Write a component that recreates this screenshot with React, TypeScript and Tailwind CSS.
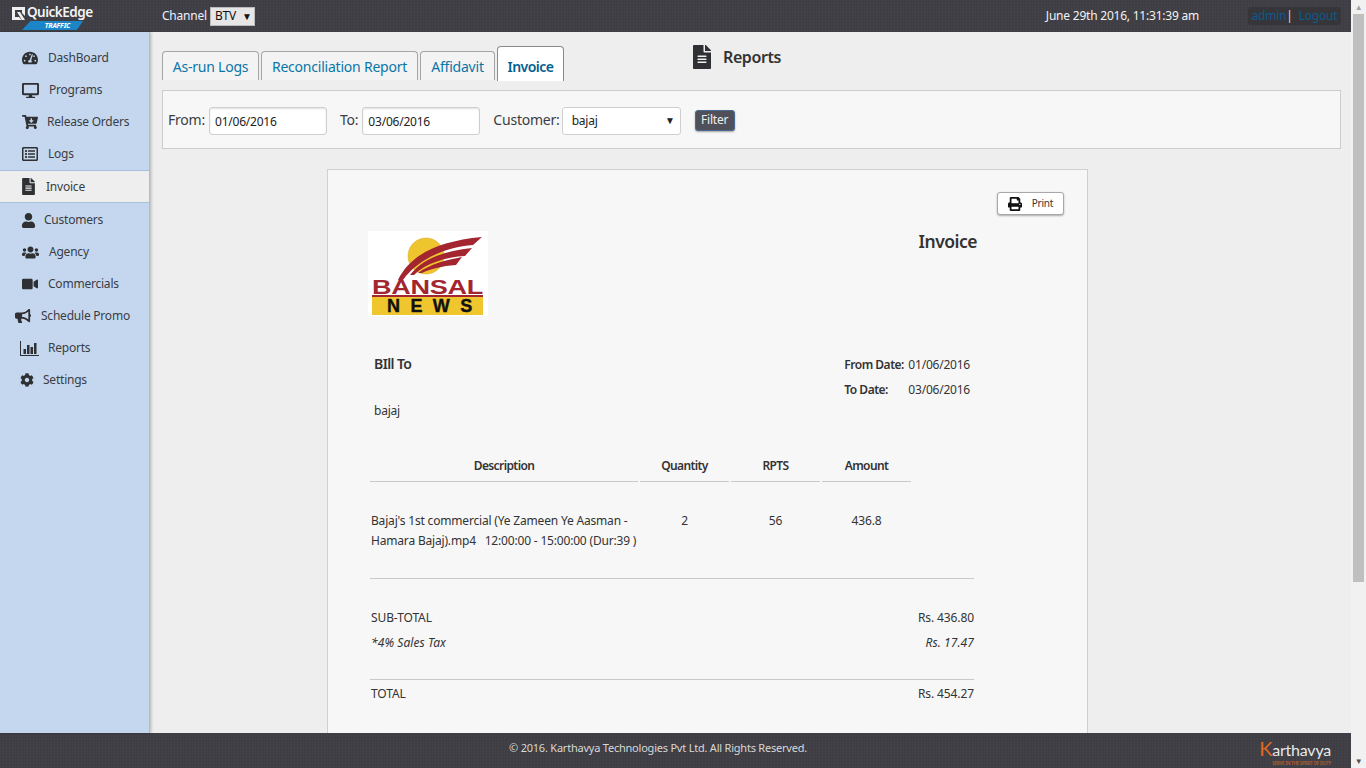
import React from "react";
import { FaTachometerAlt, FaDesktop, FaCartArrowDown, FaRegListAlt, FaFileAlt, FaUser, FaUsers, FaVideo, FaBullhorn, FaCog, FaPrint } from "react-icons/fa";

const font = "font-['Noto_Sans','Open_Sans',sans-serif] tracking-[-0.22px]";
const texture = "bg-[#3f3f45] bg-[repeating-linear-gradient(90deg,rgba(255,255,255,0.015)_0px,rgba(255,255,255,0.015)_1px,transparent_1px,transparent_3px),repeating-linear-gradient(0deg,rgba(0,0,0,0.03)_0px,rgba(0,0,0,0.03)_1px,transparent_1px,transparent_3px)]";

function ChartIcon() {
  return (
    <svg width="19" height="15" viewBox="0 0 19 15" fill="#2f3033">
      <rect x="0" y="0" width="1" height="15" />
      <rect x="0" y="14" width="19" height="1" />
      <rect x="3.5" y="8" width="2.5" height="5" />
      <rect x="7" y="4" width="2.5" height="9" />
      <rect x="10.5" y="6" width="2.5" height="7" />
      <rect x="14" y="2" width="2.5" height="11" />
    </svg>
  );
}

const items: { label: string; icon: React.ReactNode; pl: string; gap: string; active?: boolean }[] = [
  { label: "DashBoard", icon: <FaTachometerAlt size={16} />, pl: "pl-[22px]", gap: "w-[26px]" },
  { label: "Programs", icon: <FaDesktop size={17} />, pl: "pl-[22px]", gap: "w-[27px]" },
  { label: "Release Orders", icon: <FaCartArrowDown size={16} />, pl: "pl-[22px]", gap: "w-[25px]" },
  { label: "Logs", icon: <FaRegListAlt size={16} />, pl: "pl-[22px]", gap: "w-[26px]" },
  { label: "Invoice", icon: <FaFileAlt size={17} />, pl: "pl-[20px]", gap: "w-[26px]", active: true },
  { label: "Customers", icon: <FaUser size={15} />, pl: "pl-[21px]", gap: "w-[23px]" },
  { label: "Agency", icon: <FaUsers size={17} />, pl: "pl-[22px]", gap: "w-[27px]" },
  { label: "Commercials", icon: <FaVideo size={16} />, pl: "pl-[22px]", gap: "w-[26px]" },
  { label: "Schedule Promo", icon: <FaBullhorn size={16} />, pl: "pl-[15px]", gap: "w-[26px]" },
  { label: "Reports", icon: <ChartIcon />, pl: "pl-[20px]", gap: "w-[28px]" },
  { label: "Settings", icon: <FaCog size={14} />, pl: "pl-[20px]", gap: "w-[23px]" },
];

function Sidebar() {
  return (
    <aside className="w-[150px] shrink-0 bg-[#c5d7ee] border-r border-[#a9bdd6] shadow-[1px_0_3px_rgba(0,0,0,0.25)] pt-[10px] h-full z-10">
      {items.map((it) => (
        <div
          key={it.label}
          className={`flex items-center text-[12px] text-[#3a3d45] ${it.pl} ${
            it.active
              ? "h-[33px] mb-px bg-[#eeeeee] border-y border-[#a9c0dd]"
              : "h-[32px]"
          }`}
        >
          <span className="flex w-0 items-center text-[#2f3033]">
            <span className="shrink-0">{it.icon}</span>
          </span>
          <span className={`shrink-0 ${it.gap}`} />
          <span className="whitespace-nowrap">{it.label}</span>
        </div>
      ))}
    </aside>
  );
}

function Tab({ label, active, w }: { label: string; active?: boolean; w: string }) {
  return active ? (
    <div className={`${w} h-[35px] bg-white border border-b-0 border-[#8b8b8b] rounded-t-[4px] flex items-center justify-center text-[14px] font-semibold tracking-[-0.5px] text-[#00608f] -mb-px z-10 pt-[5px]`}>
      {label}
    </div>
  ) : (
    <div className={`${w} h-[29px] self-end bg-[#f3f3f3] border border-b-0 border-[#a5a5a5] rounded-t-[4px] flex items-center justify-center text-[14px] text-[#0a76a8]`}>
      {label}
    </div>
  );
}

function Field({ value, w }: { value: string; w: string }) {
  return (
    <div className={`${w} h-[28px] bg-white border border-[#cfcfcf] rounded-[3px] shadow-[inset_0_1px_2px_rgba(0,0,0,0.12)] flex items-center pl-[5px] pt-[2px] text-[12px] text-[#222]`}>
      {value}
    </div>
  );
}

function BansalLogo() {
  return (
    <svg width="120" height="85" viewBox="0 0 120 85" className="block">
      <rect width="120" height="85" fill="#ffffff" />
      <circle cx="58" cy="25" r="18" fill="#eec52e" stroke="#d9a91c" strokeWidth="0.5" />
      <path d="M30 49 C42 24 70 10 114 6 L105 14 C78 16 50 28 35 49 Z" fill="#a3252f" />
      <path d="M42 44 C54 28 76 20 104 17 L97 25 C78 26 58 32 46 44 Z" fill="#a3252f" />
      <path d="M50 42 C62 33 78 29 94 26 L88 34 C74 35 62 38 54 42 Z" fill="#a3252f" />
      <text x="4" y="63" fontFamily="'Liberation Sans',sans-serif" fontWeight="700" fontSize="20" fill="#a3252f" textLength="111" lengthAdjust="spacingAndGlyphs">BANSAL</text>
      <rect x="4" y="64" width="111" height="2" fill="#a3252f" />
      <rect x="4" y="66" width="111" height="18" fill="#f0c62e" />
      <text x="19" y="81" fontFamily="'Liberation Sans',sans-serif" fontWeight="700" fontSize="18" fill="#111" stroke="#111" strokeWidth="0.4" textLength="85">NEWS</text>
    </svg>
  );
}

function QuickEdgeLogo() {
  return (
    <div className="relative w-[100px] h-[32px] ml-[11px] shrink-0">
      <div className="flex items-center h-[18px] mt-[4px]">
        <svg width="15" height="15" viewBox="0 0 15 15" className="mt-[1px]">
          <path d="M1 1h13v9l-3-3V4H4v7h4l3 3H1z" fill="#f0f0f0" />
          <path d="M6 6h3l5 8h-3z" fill="#f0f0f0" />
        </svg>
        <span className="ml-px text-[13.5px] font-semibold text-[#f4f4f4] tracking-[-0.5px] leading-none">QuickEdge</span>
      </div>
      <div className="absolute left-[11px] top-[21px] w-[61px] h-[9px] bg-[#1c85c8] [clip-path:polygon(14%_0,100%_0,90%_100%,0_100%)] flex items-center justify-center text-[7px] font-bold italic text-white leading-none pl-[10px]">
        TRAFFIC
      </div>
    </div>
  );
}

function Header() {
  return (
    <header className={`h-[32px] shrink-0 flex items-center text-white ${texture}`}>
      <QuickEdgeLogo />
      <div className="ml-[51px] flex items-center text-[12px] text-[#eef]">
        <span>Channel</span>
        <div className="ml-[3px] w-[45px] h-[19px] bg-[#e6e6e6] border border-[#bbb] flex items-center text-[12px] text-[#111] pl-[4px]">
          BTV
          <span className="ml-[6px] text-[10px]">▼</span>
        </div>
      </div>
      <div className="ml-auto flex items-center">
        <span className="text-[12px] text-[#f2f2f2] mr-[49px]">June 29th 2016, 11:31:39 am</span>
        <div className="h-[18px] w-[93px] mr-[10px] rounded-[3px] bg-[#35353a] flex items-center justify-center text-[12px] text-[#0d5a8c]">
          admin<span className="text-[#ddd] mr-[6px]">|</span>Logout
        </div>
      </div>
    </header>
  );
}

function Footer() {
  return (
    <footer className={`h-[35px] shrink-0 flex items-center relative ${texture}`}>
      <div className="flex-1 text-center text-[11px] text-[#d8d8d8] pr-[35px] -mt-[4px]">
        © 2016. Karthavya Technologies Pvt Ltd. All Rights Reserved.
      </div>
      <div className="absolute right-[20px] top-[5px] flex flex-col items-end leading-none">
        <span className="text-[16px] font-['Lato',sans-serif] text-[#e8e8e8] leading-[20px]">
          <span className="text-[#e0671f] text-[20px]">K</span>arthavya
        </span>
        <span className="text-[4.5px] font-semibold text-[#b9622a] whitespace-nowrap mt-[1px]">SERVE IN THE SPIRIT OF DUTY</span>
      </div>
    </footer>
  );
}

function Invoice() {
  const head = "font-semibold tracking-[-0.6px]";
  return (
    <div className="ml-[165px] w-[761px] h-[600px] shrink-0 bg-[#f7f7f7] border border-[#d0d0d0] px-[40px] text-[12px] text-[#333] relative">
      <div className="flex justify-end -mr-[17px] pt-[22px]">
        <div className="w-[67px] h-[23px] bg-white border border-[#a8a8a8] rounded-[3px] shadow-[0_1px_2px_rgba(0,0,0,0.3)] flex items-center justify-center gap-[10px] text-[10px] text-[#333]">
          <FaPrint size={14} className="text-[#111]" />
          <span>Print</span>
        </div>
      </div>
      <div className="flex justify-between mt-[16px] h-[85px]">
        <BansalLogo />
        <div className="text-[17.5px] font-semibold tracking-[-0.5px] text-[#333] leading-[20px] mr-[70px]">Invoice</div>
      </div>
      <div className="flex justify-between mt-[38px] h-[60px] pl-[6px] pr-[77px]">
        <div>
          <div className={`text-[14px] leading-[20px] text-[#333] ${head}`}>BIll To</div>
          <div className="mt-[27px] leading-[20px]">bajaj</div>
        </div>
        <div className="-mt-[2px]">
          <div className="flex h-[25px] items-center">
            <span className="w-[64px] whitespace-nowrap font-semibold tracking-[-0.5px]">From Date:</span>
            <span>01/06/2016</span>
          </div>
          <div className="flex h-[25px] items-center">
            <span className="w-[64px] whitespace-nowrap font-semibold tracking-[-0.5px]">To Date:</span>
            <span>03/06/2016</span>
          </div>
        </div>
      </div>
      <div className={`mt-[37px] w-[541px] ml-[2px] grid grid-cols-[268px_89px_89px_89px] gap-x-[2px] text-center ${head}`}>
        {["Description", "Quantity", "RPTS", "Amount"].map((h) => (
          <div key={h} className="h-[31px] border-b border-[#c9c9c9] leading-[28px] pt-[1px]">{h}</div>
        ))}
      </div>
      <div className="ml-[2px] w-[541px] grid grid-cols-[268px_89px_89px_89px] gap-x-[2px] mt-[29px] leading-[20px] h-[67px] tracking-[-0.18px]">
        <div className="pl-[1px] whitespace-nowrap">Bajaj's 1st commercial (Ye Zameen Ye Aasman -<br />Hamara Bajaj).mp4 &nbsp; 12:00:00 - 15:00:00 (Dur:39 )</div>
        <div className="text-center">2</div>
        <div className="text-center">56</div>
        <div className="text-center">436.8</div>
      </div>
      <div className="ml-[2px] w-[604px] border-t border-[#c9c9c9] pt-[26px] tracking-[-0.1px]">
        <div className="flex justify-between h-[25px] leading-[25px] pl-px">
          <span>SUB-TOTAL</span><span>Rs. 436.80</span>
        </div>
        <div className="flex justify-between h-[25px] leading-[25px] italic pl-px tracking-[0.08px]">
          <span>*4% Sales Tax</span><span>Rs. 17.47</span>
        </div>
      </div>
      <div className="ml-[2px] w-[604px] border-t border-[#c9c9c9] mt-[24px] pt-[1px] tracking-[-0.1px]">
        <div className="flex justify-between h-[25px] leading-[25px] pl-px">
          <span>TOTAL</span><span>Rs. 454.27</span>
        </div>
      </div>
    </div>
  );
}

function Content() {
  return (
    <main className="flex-1 min-w-0 bg-[#eeeeee] pl-[12px] pr-[10px] overflow-hidden">
      <div className="relative h-[48px] pt-[14px] flex items-end gap-[2px]">
        <Tab label="As-run Logs" w="w-[97px]" />
        <Tab label="Reconciliation Report" w="w-[157px]" />
        <Tab label="Affidavit" w="w-[75px]" />
        <Tab label="Invoice" active w="w-[67px]" />
        <div className="ml-[124px] self-start flex items-center text-[#333] -mt-[1px]">
          <FaFileAlt size={24} className="text-[#2f3033]" />
          <span className="ml-[9px] text-[16px] font-semibold tracking-[-0.4px]">Reports</span>
        </div>
      </div>
      <div className="mt-[10px] h-[59px] bg-[#f7f7f7] border border-[#cccccc] flex items-center pl-[5px] text-[14px] text-[#3a3d45]">
        <span className="-mt-px">From:</span>
        <div className="ml-[4px] mt-[2px]"><Field value="01/06/2016" w="w-[118px]" /></div>
        <span className="ml-[13px] -mt-px">To:</span>
        <div className="ml-[4px] mt-[2px]"><Field value="03/06/2016" w="w-[118px]" /></div>
        <span className="ml-[13px] -mt-px">Customer:</span>
        <div className="ml-[2px] mt-[2px] w-[119px] h-[28px] bg-white border border-[#cfcfcf] rounded-[3px] flex items-center justify-between pl-[9px] pr-[5px] text-[12px] text-[#222]">
          <span>bajaj</span><span className="text-[10px]">▼</span>
        </div>
        <div className="ml-[14px] mt-[1px] w-[40px] h-[21px] bg-[#50505a] border border-[#4a6a96] rounded-[3px] shadow-[0_1px_2px_rgba(0,0,0,0.35)] flex items-center justify-center text-[12px] text-[#eee]">Filter</div>
      </div>
      <div className="mt-[20px]"><Invoice /></div>
    </main>
  );
}

function Scrollbar() {
  return (
    <div className="w-[15px] h-full shrink-0 bg-[#f1f1f1] flex flex-col items-center">
      <div className="h-[14px] flex items-center justify-center text-[#a3a3a3] text-[8px] leading-none">▲</div>
      <div className="w-[11px] h-[568px] bg-[#bfbfbf]" />
      <div className="flex-1" />
      <div className="h-[14px] flex items-center justify-center text-[#505050] text-[8px] leading-none">▼</div>
    </div>
  );
}

export default function App() {
  return (
    <div className={`w-[1366px] h-[768px] overflow-hidden flex ${font}`}>
      <div className="w-[1351px] flex flex-col h-full">
        <Header />
        <div className="flex flex-1 min-h-0">
          <Sidebar />
          <Content />
        </div>
        <Footer />
      </div>
      <Scrollbar />
    </div>
  );
}
